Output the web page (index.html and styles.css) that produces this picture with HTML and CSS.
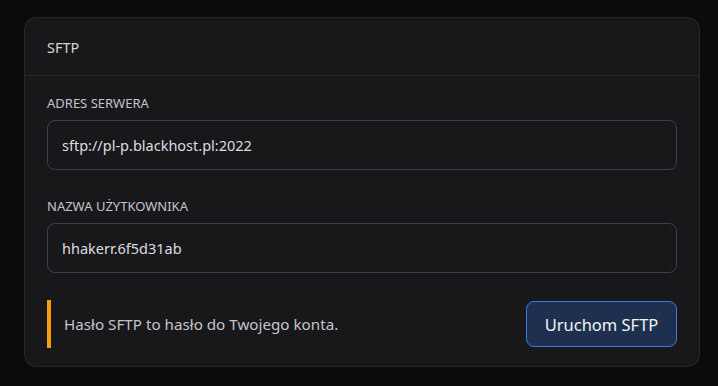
FILE: index.html
```html
<!DOCTYPE html>
<html lang="pl">
<head>
    <meta charset="utf-8">
    <title>SFTP</title>
    <link rel="stylesheet" href="styles.css">
</head>
<body>
    <div class="card">
        <div class="card-header">SFTP</div>
        <div class="card-body">
            <div class="field">
                <label class="label">Adres serwera</label>
                <div class="input">sftp://pl-p.blackhost.pl:2022</div>
            </div>
            <div class="field">
                <label class="label">Nazwa użytkownika</label>
                <div class="input">hhakerr.6f5d31ab</div>
            </div>
            <div class="footer">
                <div class="note">Hasło SFTP to hasło do Twojego konta.</div>
                <button class="btn">Uruchom SFTP</button>
            </div>
        </div>
    </div>
</body>
</html>
```

FILE: styles.css
```css
body { margin: 0; padding: 17px 18px 19px 24px; background: #0b0b0d; font-family: "Noto Sans", "Open Sans", sans-serif; color: #d4d4d8; }
.card { background: #18181b; border: 1px solid #27272a; border-radius: 12px; box-sizing: border-box; height: 350px; }
.card-header { height: 57px; padding: 0 22px; display: flex; align-items: center; font-size: 14.5px; color: #d4d4d8; border-bottom: 1px solid #27272a; }
.card-body { padding: 17px 22px 19px; display: flex; flex-direction: column; }
.field { display: flex; flex-direction: column; margin-bottom: 26px; }
.field + .field { margin-bottom: 27px; }
.label { font-size: 13px; text-transform: uppercase; color: #c4c4cc; margin-bottom: 7px; line-height: 20px; }
.input { height: 50px; box-sizing: border-box; border: 1px solid #3f3f46; border-radius: 8px; padding: 0 14px; display: flex; align-items: center; font-size: 14.5px; color: #dcdce0; }
.footer { display: flex; align-items: center; justify-content: space-between; }
.note { border-left: 4px solid #f59e0b; padding-left: 13px; height: 48px; display: flex; align-items: center; font-size: 15.2px; color: #c4c4cc; }
.btn { height: 46px; width: 151px; background: #1e3050; border: 1px solid #3b7ad6; border-radius: 8px; color: #f4f4f5; font-family: inherit; font-size: 16.5px; }
```
